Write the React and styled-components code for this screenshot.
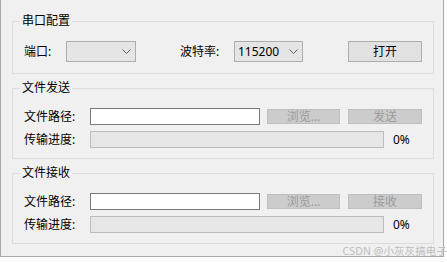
import React from "react";
import styled, { createGlobalStyle } from "styled-components";

const Global = createGlobalStyle`
  html, body { margin: 0; padding: 0; background: #fbfbfb; }
  body { font-family: "Noto Sans", "Noto Sans CJK SC", sans-serif; font-size: 12px; color: #000; }
  #root { width: 447px; height: 262px; position: relative; overflow: hidden; }
`;

const Window = styled.div`
  box-sizing: border-box;
  width: 444px;
  height: 257px;
  background: #f0f0f0;
  border-left: 1px solid #a9a9a9;
  border-right: 1px solid #a9a9a9;
  border-bottom: 1px solid #a9a9a9;
  padding: 14px 9px 0 11px;
  display: flex;
  flex-direction: column;
  gap: 7px;
`;

const Group = styled.fieldset`
  margin: 0;
  padding: 0;
  min-width: 0;
  border: 1px solid #dcdcdc;
`;

const Legend = styled.legend`
  margin-left: 7px;
  padding: 0 2px;
  font-size: 12px;
  line-height: 14px;
  color: #000;
`;

const Body = styled.div`
  padding: 13px 0 ${(p) => p.$pb || 10}px 11px;
  display: flex;
  flex-direction: column;
  gap: 6px;
`;

const Row = styled.div`
  display: flex;
  align-items: center;
  height: ${(p) => p.$h || 17}px;
`;

const Label = styled.span`
  width: ${(p) => p.$w}px;
  margin-left: ${(p) => p.$ml || 0}px;
  flex: none;
  line-height: 14px;
  white-space: nowrap;
`;

const Combo = styled.div`
  box-sizing: border-box;
  width: ${(p) => p.$w}px;
  height: 21px;
  flex: none;
  background: #e5e5e5;
  border: 1px solid #adadad;
  display: flex;
  align-items: center;
  justify-content: space-between;
  padding: 0 4px 0 3px;
  font-size: 12px;
  line-height: 14px;
`;

const Button = styled.div`
  box-sizing: border-box;
  width: ${(p) => p.$w}px;
  height: ${(p) => p.$h || 15}px;
  margin-left: ${(p) => p.$ml || 0}px;
  flex: none;
  display: flex;
  align-items: center;
  justify-content: center;
  background: ${(p) => (p.$disabled ? "#cccccc" : "#e1e1e1")};
  border: 1px solid ${(p) => (p.$disabled ? "#bfbfbf" : "#adadad")};
  color: ${(p) => (p.$disabled ? "#9b9b9b" : "#000")};
  font-size: 12px;
  line-height: 14px;
`;

const TextInput = styled.div`
  box-sizing: border-box;
  width: 170px;
  height: 17px;
  flex: none;
  background: #fff;
  border: 1px solid #7a7a7a;
`;

const Progress = styled.div`
  box-sizing: border-box;
  width: 294px;
  height: 17px;
  flex: none;
  background: #e6e6e6;
  border: 1px solid #bcbcbc;
`;

const Percent = styled.span`
  margin-left: 9px;
  line-height: 14px;
`;

const Watermark = styled.div`
  position: absolute;
  right: 0;
  bottom: 5px;
  font-size: 10.5px;
  line-height: 12px;
  color: #bdbdbd;
  white-space: nowrap;
  letter-spacing: 0.1px;
`;

const Chevron = () => (
  <svg width="9" height="5" viewBox="0 0 9 5">
    <polyline points="0.5,0.5 4.5,4.5 8.5,0.5" fill="none" stroke="#606060" strokeWidth="1" />
  </svg>
);

const FileGroup = ({ title, action, pb }) => (
  <Group>
    <Legend>{title}</Legend>
    <Body $pb={pb}>
      <Row>
        <Label $w={66}>文件路径:</Label>
        <TextInput />
        <Button $w={73} $ml={7} $disabled>浏览...</Button>
        <Button $w={74} $ml={8} $disabled>{action}</Button>
      </Row>
      <Row>
        <Label $w={66}>传输进度:</Label>
        <Progress />
        <Percent>0%</Percent>
      </Row>
    </Body>
  </Group>
);

export default function App() {
  return (
    <>
      <Global />
      <Window>
        <Group>
          <Legend>串口配置</Legend>
          <Body $pb={11}>
            <Row $h={21}>
              <Label $w={42}>端口:</Label>
              <Combo $w={70}>
                <span />
                <Chevron />
              </Combo>
              <Label $w={54} $ml={44}>波特率:</Label>
              <Combo $w={69}>
                <span>115200</span>
                <Chevron />
              </Combo>
              <Button $w={74} $h={21} $ml={45}>打开</Button>
            </Row>
          </Body>
        </Group>
        <FileGroup title="文件发送" action="发送" />
        <FileGroup title="文件接收" action="接收" />
      </Window>
      <Watermark>CSDN @小灰灰搞电子</Watermark>
    </>
  );
}
